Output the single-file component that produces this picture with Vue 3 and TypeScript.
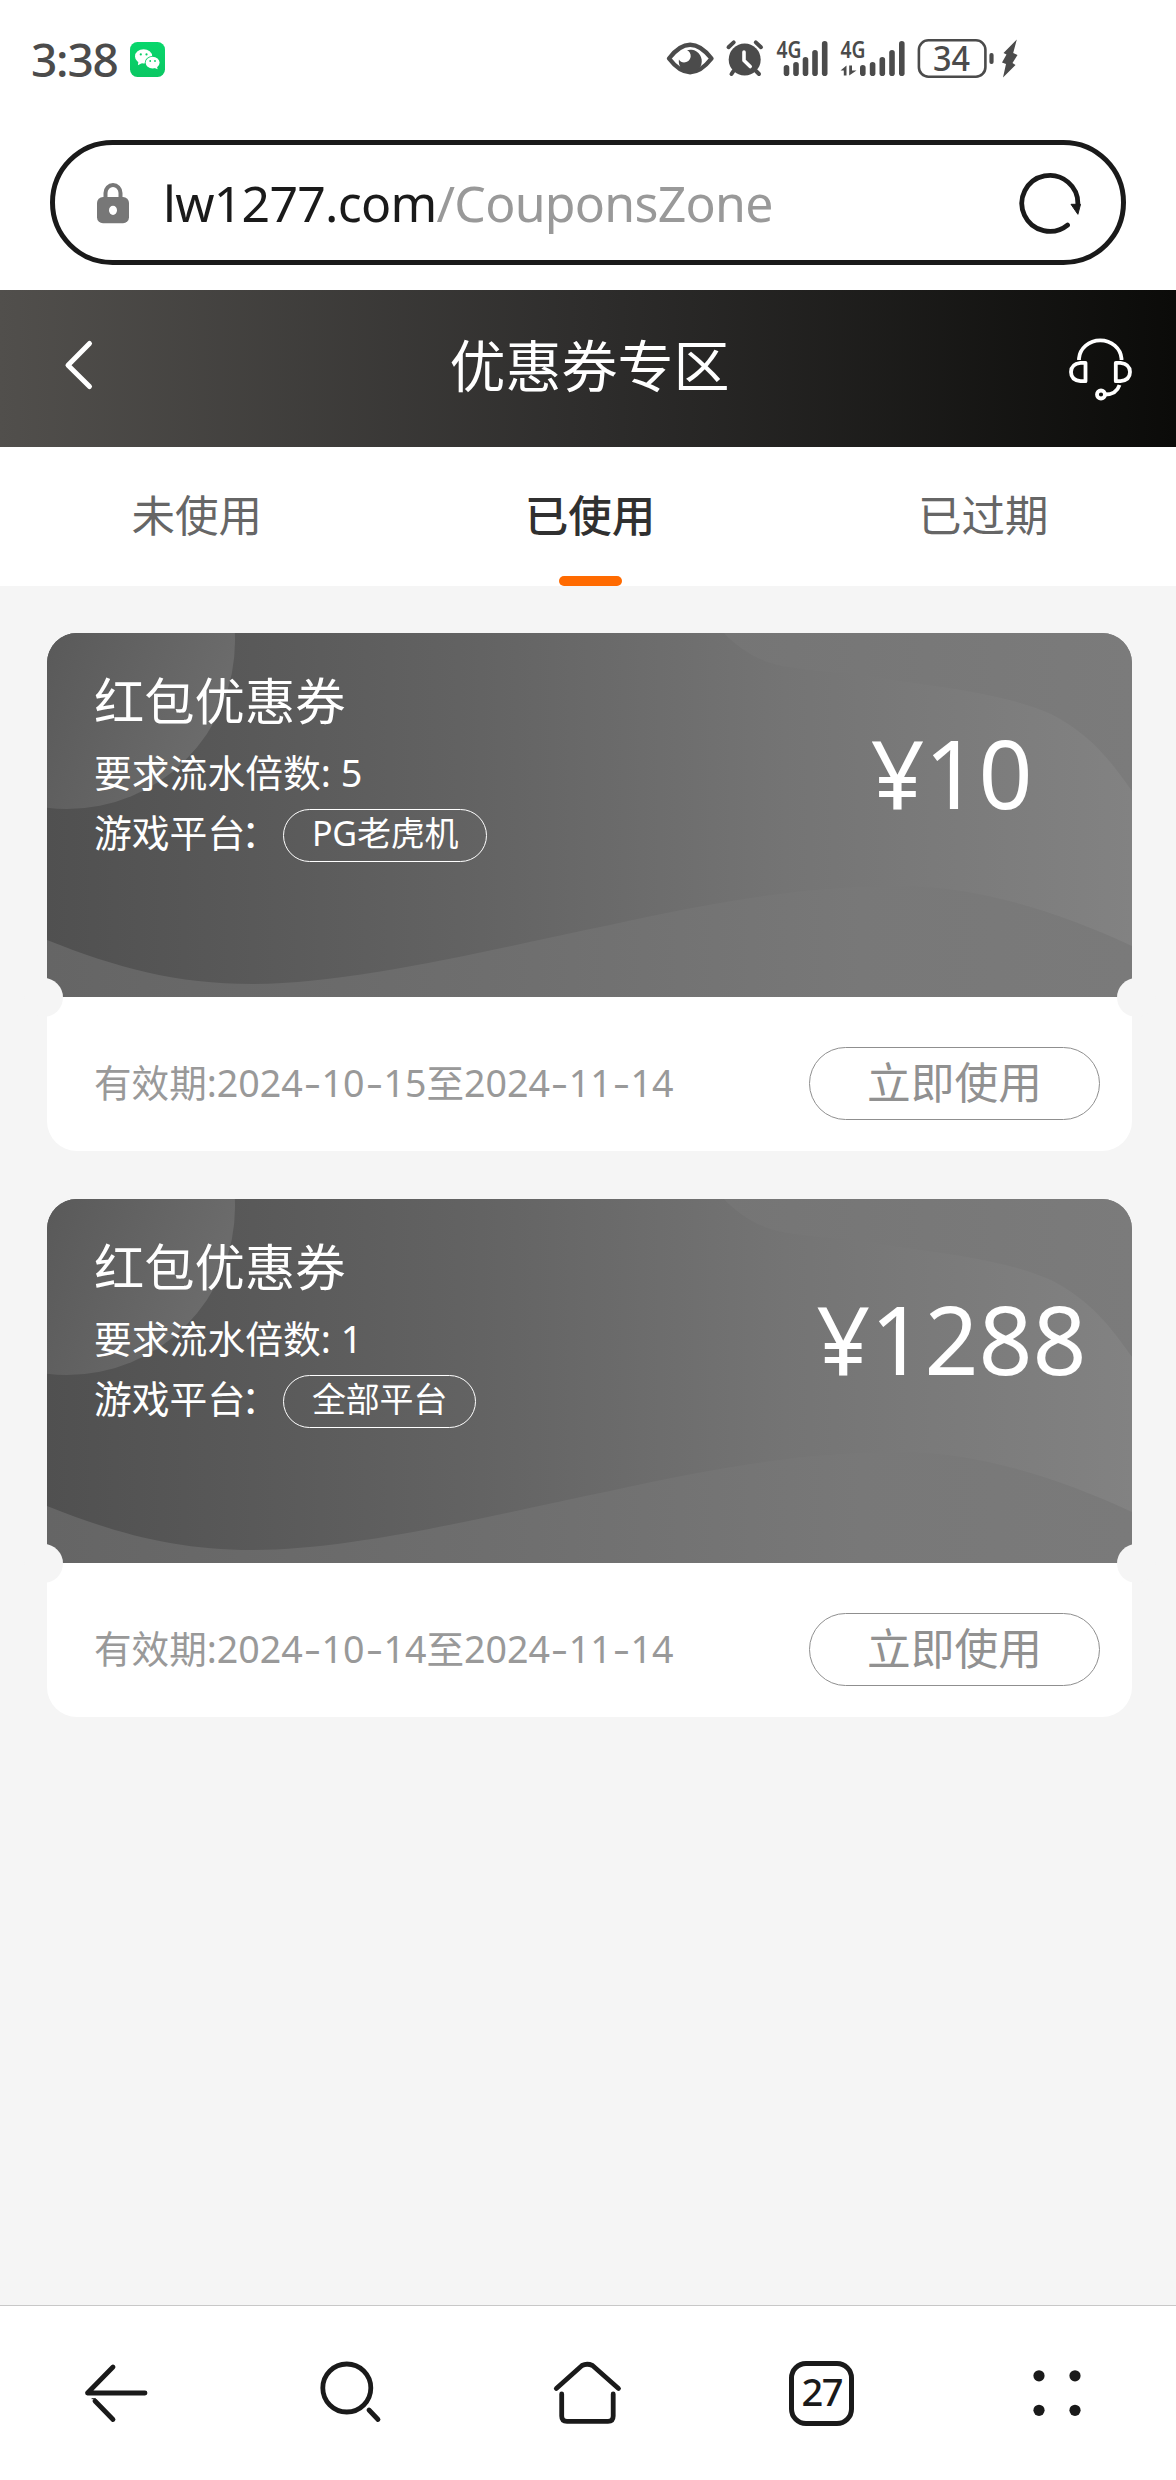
<script setup lang="ts">
interface Coupon {
  title: string
  multiple: number
  platform: string
  amount: number
  from: string
  to: string
}

const tabs: string[] = ['未使用', '已使用', '已过期']
const activeTab = 1

const coupons: Coupon[] = [
  { title: '红包优惠券', multiple: 5, platform: 'PG老虎机', amount: 10, from: '2024-10-15', to: '2024-11-14' },
  { title: '红包优惠券', multiple: 1, platform: '全部平台', amount: 1288, from: '2024-10-14', to: '2024-11-14' },
]

const barTops: number[] = [65, 62, 57, 50, 41]
const simBars: number[][] = [
  [786.5, 796, 805.5, 815, 824.7],
  [862.8, 872.6, 882.3, 892, 901.8],
]

const period = (c: Coupon): string[] => `有效期:${c.from}至${c.to}`.split(/(-)/)
</script>

<template>
  <div class="screen">
    <div class="status">
      <span class="clock">3:38</span>
      <svg class="wechat" width="35" height="35" viewBox="0 0 35 35">
        <defs>
          <linearGradient id="wx" x1="0" y1="0" x2="0" y2="1">
            <stop offset="0" stop-color="#08d76c" />
            <stop offset="1" stop-color="#0bc763" />
          </linearGradient>
        </defs>
        <rect width="35" height="35" rx="7.5" fill="url(#wx)" />
        <ellipse cx="13.6" cy="14.4" rx="8.6" ry="7.2" fill="#fff" />
        <path d="M8.5 19l-.6 4.2 4.2-2.2z" fill="#fff" />
        <ellipse cx="22.6" cy="20.6" rx="7.8" ry="6.6" fill="#08cf67" />
        <ellipse cx="22.6" cy="20.6" rx="7" ry="5.8" fill="#fff" />
        <path d="M27 24.5l.6 2.8-3.6-1.5z" fill="#fff" />
        <g fill="#08cf67">
          <circle cx="10.8" cy="12.4" r="1.1" /><circle cx="16.5" cy="12.4" r="1.1" />
          <circle cx="20.2" cy="19" r=".9" /><circle cx="25" cy="19" r=".9" />
        </g>
      </svg>
      <svg class="indicators" width="360" height="78" viewBox="662 20 360 78">
        <g fill="#4b4b4b">
          <path d="M669 58.5Q690 31 711.5 58.5Q690 86 669 58.5Z" fill="none" stroke="#4b4b4b" stroke-width="4.4" stroke-linejoin="round" />
          <path d="M687 50.2A11.5 11.5 0 1 1 678.9 59.5C681.5 64.5 690 63 690.7 56.5C690.9 53.5 689.5 51.5 687 50.2Z" />
          <circle cx="744.7" cy="59.5" r="16" />
          <g stroke="#4b4b4b" stroke-width="4" stroke-linecap="round" fill="none">
            <path d="M728.5 47.2l5.2-4.8M761 47.2l-5.2-4.8M733.5 71l-2 3M756 71l3 3" />
          </g>
          <path d="M744 52v8.5l6.2 6" stroke="#fff" stroke-width="3.6" stroke-linecap="round" stroke-linejoin="round" fill="none" />
          <g v-for="(bars, s) in simBars" :key="s">
            <rect v-for="(x, i) in bars" :key="i" :x="x - 2.8" :y="barTops[i]" width="5.6" :height="76 - barTops[i]" rx="2.8" />
          </g>
          <text class="net" x="776.5" y="58" textLength="25" lengthAdjust="spacingAndGlyphs">4G</text>
          <text class="net" x="840.5" y="58" textLength="25" lengthAdjust="spacingAndGlyphs">4G</text>
          <path d="M840.5 70.5L846.5 65.5V75.5H843.8V70.5ZM849.2 65.5H852V70.5H856.5L849.2 75.5Z" />
          <rect x="918.9" y="40.3" width="66.5" height="36.4" rx="9.5" fill="none" stroke="#4b4b4b" stroke-width="2.6" />
          <text class="level" x="933" y="71" textLength="37" lengthAdjust="spacingAndGlyphs">34</text>
          <rect x="989.4" y="53" width="4.2" height="11" rx="2" />
          <path d="M1016.8 39.5L1003.5 53L1006.5 54.5L1002 62.5L1006 64L1003 77.5L1015.5 65L1012.5 63L1017.5 55L1013.2 53Z" />
        </g>
      </svg>
    </div>

    <div class="address">
      <svg class="lock" width="32" height="42" viewBox="0 0 32 42">
        <path d="M8.5 18V11a7.500 8 0 0 1 15 0V18" fill="none" stroke="#777" stroke-width="4" />
        <rect y="15" width="32" height="26.3" rx="6" fill="#777" />
        <ellipse cx="16" cy="28.3" rx="4" ry="4.6" fill="#fff" />
      </svg>
      <span class="host">lw1277.com</span><span class="path">/CouponsZone</span>
      <svg class="reload" width="64" height="64" viewBox="1018.5 170.2 64 64">
        <path d="M1078.3 204A28 28 0 1 0 1068 224.3" fill="none" stroke="#1a1a1a" stroke-width="4.8" stroke-linecap="round" />
        <path d="M1071.5 203.5H1081L1078.4 213.5Z" fill="#1a1a1a" stroke="#1a1a1a" stroke-width="1" stroke-linejoin="round" />
      </svg>
    </div>

    <header class="topbar">
      <svg class="back" width="32" height="52" viewBox="0 0 32 52">
        <path d="M26.5 4.5L5 26.2L26.5 47.5" fill="none" stroke="#fff" stroke-width="5" stroke-linecap="round" stroke-linejoin="round" />
      </svg>
      <h1>优惠券专区</h1>
      <svg class="service" width="66" height="66" viewBox="1067 335 66 66">
        <g fill="none" stroke="#fff" stroke-width="3.8">
          <path d="M1079 359V357.5A21.3 19.5 0 0 1 1121.5 357.5V359" />
          <path d="M1085.5 361.8H1080.5Q1071 363 1071 371T1080.5 380.2H1085.5Z" stroke-linejoin="round" />
          <path d="M1115.8 361.8H1120.5Q1130 363 1130 371T1120.5 380.2H1115.8Z" stroke-linejoin="round" />
          <circle cx="1101" cy="393.5" r="4" />
          <path d="M1105 393.5Q1116.5 393.5 1119.5 384" />
        </g>
      </svg>
    </header>

    <nav class="tabs">
      <div v-for="(t, i) in tabs" :key="t" class="tab" :class="{ active: i === activeTab }">
        <span>{{ t }}</span>
      </div>
    </nav>

    <main class="list">
      <article v-for="(c, i) in coupons" :key="i" class="coupon">
        <section class="face">
          <svg class="art" width="1085" height="364" viewBox="0 0 1085 364">
            <defs>
              <linearGradient :id="'wave' + i" x1="0" x2="1" y1="0" y2="0">
                <stop offset="0" stop-color="#656565" />
                <stop offset=".45" stop-color="#6f6f6f" />
                <stop offset=".75" stop-color="#787878" />
                <stop offset="1" stop-color="#7a7a7a" />
              </linearGradient>
              <linearGradient :id="'disc' + i" x1="0" y1="20" x2="165" y2="80" gradientUnits="userSpaceOnUse">
                <stop offset="0" stop-color="#5a5a5a" />
                <stop offset="1" stop-color="#6b6b6b" />
              </linearGradient>
              <linearGradient :id="'cloud' + i" x1="0" x2="1" y1="0" y2="0">
                <stop offset="0" stop-color="#757575" />
                <stop offset="1" stop-color="#7b7b7b" />
              </linearGradient>
            </defs>
            <circle cx="20" cy="8" r="168" :fill="`url(#disc${i})`" />
            <path d="M677 0C690 14 710 28 735 33C775 40 810 40 845 47C910 56 960 62 1004 81C1045 102 1065 130 1085 158V0Z" :fill="`url(#cloud${i})`" />
            <path d="M0 307C70 335 130 351 205 351C310 351 450 315 563 292C670 268 760 253 852 253C930 253 1010 278 1085 313V364H0Z" :fill="`url(#wave${i})`" />
          </svg>
          <div class="info">
            <h2>{{ c.title }}</h2>
            <p class="rule">要求流水倍数: {{ c.multiple }}</p>
            <div class="platform">
              <span class="label">游戏平台<span class="colon">：</span></span>
              <span class="tag">{{ c.platform }}</span>
            </div>
          </div>
          <div class="amount">¥{{ c.amount }}</div>
        </section>
        <footer class="foot">
          <span class="date"><span v-for="(p, k) in period(c)" :key="k" :class="{ dash: p === '-' }">{{ p }}</span></span>
          <button class="use" type="button">立即使用</button>
        </footer>
        <i class="notch left"></i>
        <i class="notch right"></i>
      </article>
    </main>

    <nav class="browser">
      <div class="slot">
        <svg width="66" height="66" viewBox="84.5 2360.5 66 66">
          <g fill="none" stroke="#1a1a1a" stroke-width="4.8" stroke-linecap="round" stroke-linejoin="round">
            <path d="M146.5 2393.5H89L114.5 2367.5" />
            <path d="M96.500 2401.500L114.5 2420" />
            <path d="M93.5 2399.2H97L97.5 2402" stroke-width="1" />
          </g>
        </svg>
      </div>
      <div class="slot">
        <svg width="66" height="66" viewBox="318.5 2360.5 66 66">
          <g fill="none" stroke="#1a1a1a" stroke-width="4.8" stroke-linecap="round">
            <ellipse cx="347.3" cy="2388.5" rx="24" ry="24" />
            <path d="M369.5 2410.5L378.5 2420" />
          </g>
        </svg>
      </div>
      <div class="slot">
        <svg width="72" height="68" viewBox="551 2360 72 68">
          <g fill="none" stroke="#1a1a1a" stroke-width="4.8" stroke-linecap="round" stroke-linejoin="round">
            <path d="M556.3 2389.5L582 2366.500Q587 2364 592.5 2366.500L618.5 2389.5" />
            <path d="M561.7 2395V2417Q561.7 2422.3 567 2422.3H608Q613.2 2422.3 613.2 2417V2395" />
          </g>
        </svg>
      </div>
      <div class="slot"><span class="pages">27</span></div>
      <div class="slot">
        <svg width="48" height="46" viewBox="1033.5 2368.7 48 46">
          <g fill="#1a1a1a">
            <circle cx="1039.5" cy="2374.5" r="5.6" /><circle cx="1075.5" cy="2374.5" r="5.6" />
            <circle cx="1039.5" cy="2409" r="5.6" /><circle cx="1075.5" cy="2409" r="5.6" />
          </g>
        </svg>
      </div>
    </nav>
  </div>
</template>

<style>
body {
  margin: 0;
  background: #f5f5f5;
}
</style>

<style scoped>
.screen {
  width: 1176px;
  height: 2480px;
  display: flex;
  flex-direction: column;
  overflow: hidden;
  background: #f5f5f5;
  font-family: "Noto Sans", "Noto Sans CJK SC", sans-serif;
}

.screen *,
.screen *::after {
  box-sizing: border-box;
}

.status {
  flex: none;
  height: 118px;
  padding: 0 154px 0 31px;
  display: flex;
  align-items: center;
  background: #fff;
}

.clock {
  width: 99px;
  font-size: 46px;
  line-height: 46px;
  font-weight: 500;
  letter-spacing: -1.2px;
  color: #4b4b4b;
}

.indicators {
  margin-left: auto;
}

.net {
  font: 600 23.5px "Noto Sans", sans-serif;
}

.level {
  font: 500 33.5px "Noto Sans", sans-serif;
}

.address {
  flex: none;
  height: 172px;
  padding: 22px 50px 25px;
  display: flex;
  align-items: center;
  background: #fff;
  position: relative;
}

.address::after {
  content: "";
  position: absolute;
  inset: 22px 50px 25px;
  border: 5px solid #1a1a1a;
  border-radius: 63px;
}

.lock {
  margin: 0 34px 0 47px;
}

.host,
.path {
  font-size: 50px;
  line-height: 60px;
  letter-spacing: -0.75px;
  white-space: pre;
}

.host {
  color: #1a1a1a;
}

.path {
  color: #999;
}

.reload {
  margin: 0 44px 0 auto;
}

.topbar {
  flex: none;
  height: 157px;
  padding: 0 43px 0 63px;
  display: flex;
  align-items: center;
  justify-content: space-between;
  background: linear-gradient(90deg, #514f4c, #2e2d2c 50%, #0b0b09);
}

.back {
  margin: 0 14px 8px 0;
}

h1 {
  margin: 0 0 8px 3px;
  font-size: 56px;
  line-height: 70px;
  font-weight: 400;
  color: #fff;
}

.tabs {
  flex: none;
  width: 1180px;
  height: 139px;
  display: flex;
  background: #fff;
}

.tab {
  position: relative;
  flex: 1;
  display: flex;
  align-items: center;
  justify-content: center;
  padding-bottom: 7px;
  font-size: 43.5px;
  color: #666;
}

.tab.active {
  font-weight: 500;
  color: #303030;
}

.tab.active::after {
  content: "";
  position: absolute;
  left: 50%;
  bottom: 0;
  width: 63px;
  height: 10px;
  margin-left: -31px;
  border-radius: 5px;
  background: #ff6a00;
}

.list {
  flex: 1;
  padding: 47px 44px 0 47px;
  display: flex;
  flex-direction: column;
  gap: 48px;
}

.coupon {
  position: relative;
  height: 518px;
  border-radius: 30px;
  background: #fff;
}

.face {
  position: relative;
  height: 364px;
  display: flex;
  justify-content: space-between;
  border-radius: 30px 30px 0 0;
  overflow: hidden;
  background: linear-gradient(90deg, #505050, #636363 40%, #747474 68%, #828282);
  color: #fff;
}

.art {
  position: absolute;
  inset: 0;
}

.info {
  position: relative;
  padding: 43px 0 0 47px;
}

h2 {
  margin: 0;
  font-size: 50.3px;
  line-height: 50px;
  font-weight: 400;
}

.rule {
  margin: 28px 0 0;
  font-size: 37.8px;
  line-height: 38px;
}

.platform {
  margin-top: 17px;
  height: 53px;
  display: flex;
}

.label {
  width: 189px;
  font-size: 37.8px;
  line-height: 47px;
}

.colon {
  margin-left: -4px;
}

.tag {
  padding: 0 28px;
  border: 1.5px solid #fff;
  border-radius: 27px;
  font-size: 34px;
  line-height: 47px;
  letter-spacing: -0.2px;
}

.amount {
  position: relative;
  width: 361px;
  padding-top: 80px;
  text-align: center;
  font-size: 94.5px;
  line-height: 120px;
}

.foot {
  height: 154px;
  padding: 19px 32px 0 47px;
  display: flex;
  align-items: center;
  justify-content: space-between;
}

.date {
  padding-bottom: 2px;
  font-size: 37.6px;
  line-height: 44px;
  color: #999;
}

.dash {
  display: inline-block;
  width: 18.8px;
  text-align: center;
  transform: scaleX(1.4);
}

.use {
  width: 291px;
  height: 73px;
  padding: 0 0 4px;
  border: 1px solid #8f8f8f;
  border-radius: 37px;
  background: none;
  font-family: inherit;
  font-size: 43.7px;
  line-height: 60px;
  color: #919191;
}

.notch {
  position: absolute;
  top: 345px;
  width: 39px;
  height: 39px;
  border-radius: 50%;
  background: #f5f5f5;
}

.notch.left {
  left: -23.5px;
}

.notch.right {
  right: -23.5px;
}

.browser {
  flex: none;
  height: 175px;
  display: flex;
  border-top: 1px solid #c8c8c8;
  background: #fff;
}

.slot {
  flex: 1;
  display: flex;
  align-items: center;
  justify-content: center;
  padding-right: 3px;
}

.pages {
  width: 65px;
  height: 65px;
  border: 5px solid #1a1a1a;
  border-radius: 17px;
  text-align: center;
  font-size: 38px;
  line-height: 51px;
  font-weight: 500;
  letter-spacing: -1.5px;
  color: #1a1a1a;
}
</style>
